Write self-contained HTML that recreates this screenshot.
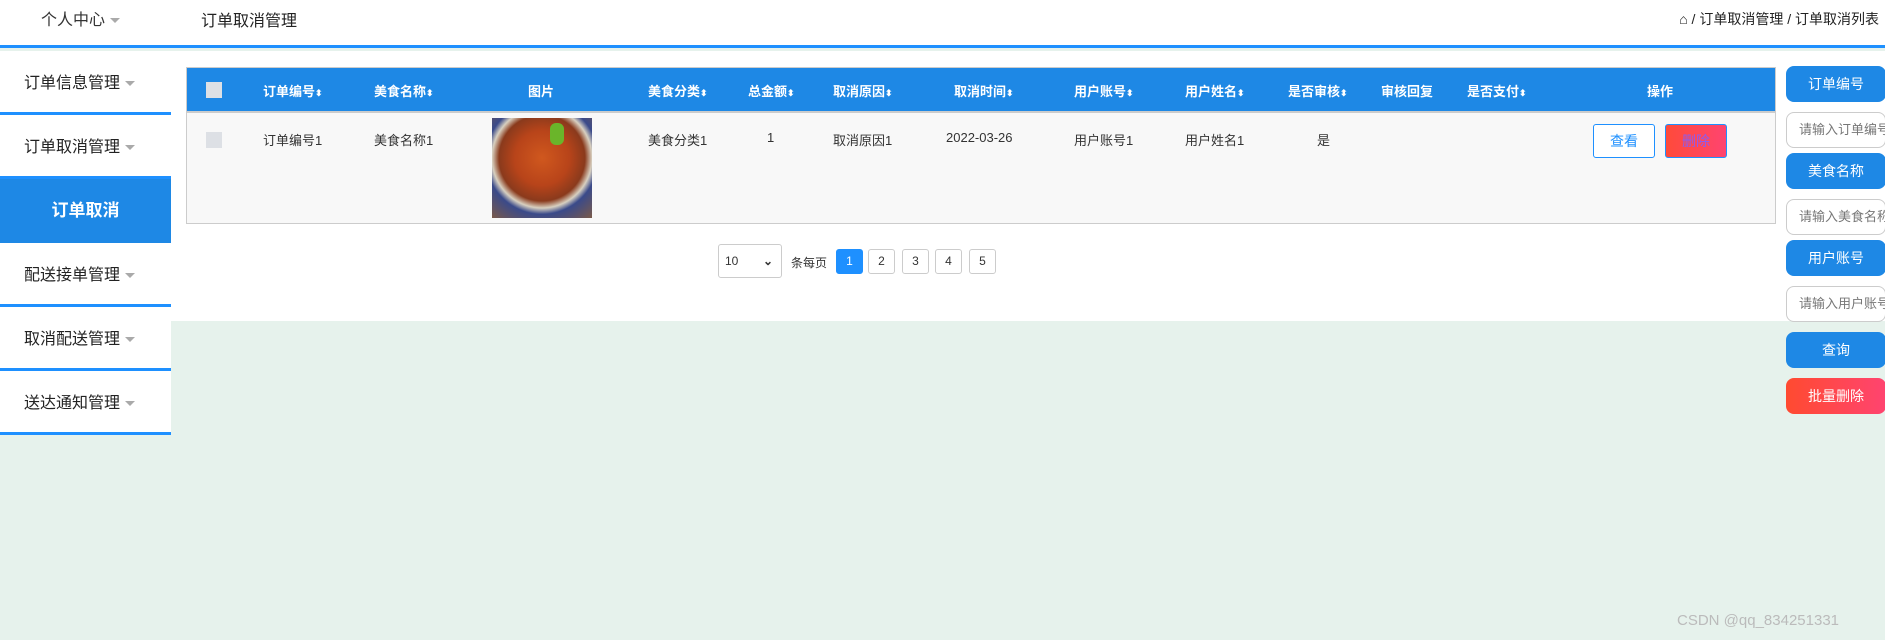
<!DOCTYPE html>
<html><head><meta charset="utf-8"><style>
*{margin:0;padding:0;box-sizing:border-box}
body{width:1885px;height:640px;overflow:hidden;background:#e6f2ec;font-family:"Liberation Sans","Noto Sans CJK SC",sans-serif;position:relative;color:#333}
.abs{position:absolute}
.hdr{left:0;top:0;width:1885px;height:48px;background:#fff;border-bottom:3px solid #1e90ff}
.white{left:171px;top:51px;width:1714px;height:270px;background:#fff}
.side{left:0;top:51px;width:171px}
.item{height:64px;background:#fff;border-bottom:3px solid #1e90ff;font-size:16px;padding-left:24px;line-height:66px;color:#222}
.item.act{background:#1e88e5;color:#fff;font-weight:bold;font-size:17px;text-align:center;padding:0;border-bottom:none;line-height:64px}
.car{display:inline-block;width:0;height:0;border-left:5px solid transparent;border-right:5px solid transparent;border-top:5px solid #aaa;vertical-align:middle;margin-left:5px}
.tbl{left:186px;top:67px;width:1590px;height:157px;border:1px solid #ccc;background:#f8f8f8}
.th{left:0;top:0;width:1588px;height:45px;background:#1e88e5;border-bottom:2px solid #ccc}
.h{position:absolute;top:13px;color:#fff;font-weight:bold;font-size:13px}
.c{position:absolute;top:62px;font-size:13px;color:#333}
.cb{position:absolute;left:19px;width:16px;height:16px;background:#dde0e5}
.s{font-size:9px}
.btn{border-radius:8px;color:#fff;font-size:14px;text-align:center;line-height:36px;background:#1e88e5;width:100px;height:36px;left:1786px}
.inp{border-radius:8px;border:1px solid #ccc;background:#fff;color:#777;font-size:13px;line-height:34px;padding-left:12px;width:100px;height:36px;left:1786px;overflow:hidden;white-space:nowrap}
.pg{top:249px;width:27px;height:25px;border:1px solid #ccc;border-radius:3px;background:#fff;font-size:12px;text-align:center;line-height:23px}
</style></head><body>
<div class="abs hdr"></div>
<div class="abs" style="left:41px;top:6px;font-size:16px">个人中心<span class="car"></span></div>
<div class="abs" style="left:201px;top:7px;font-size:16px;color:#222">订单取消管理</div>
<div class="abs" style="right:6px;top:9px;font-size:14px;color:#222">⌂ / 订单取消管理 / 订单取消列表</div>
<div class="abs white"></div>
<div class="abs side">
<div class="item">订单信息管理<span class="car"></span></div>
<div class="item">订单取消管理<span class="car"></span></div>
<div class="item act">订单取消</div>
<div class="item">配送接单管理<span class="car"></span></div>
<div class="item">取消配送管理<span class="car"></span></div>
<div class="item">送达通知管理<span class="car"></span></div>
</div>
<div class="abs tbl">
<div class="abs th"></div>
<div class="cb" style="top:14px"></div>
<div class="h" style="left:76px">订单编号<span class="s">⬍</span></div>
<div class="h" style="left:187px">美食名称<span class="s">⬍</span></div>
<div class="h" style="left:341px">图片</div>
<div class="h" style="left:461px">美食分类<span class="s">⬍</span></div>
<div class="h" style="left:561px">总金额<span class="s">⬍</span></div>
<div class="h" style="left:646px">取消原因<span class="s">⬍</span></div>
<div class="h" style="left:767px">取消时间<span class="s">⬍</span></div>
<div class="h" style="left:887px">用户账号<span class="s">⬍</span></div>
<div class="h" style="left:998px">用户姓名<span class="s">⬍</span></div>
<div class="h" style="left:1101px">是否审核<span class="s">⬍</span></div>
<div class="h" style="left:1194px">审核回复</div>
<div class="h" style="left:1280px">是否支付<span class="s">⬍</span></div>
<div class="h" style="left:1460px">操作</div>
<div class="cb" style="top:64px"></div>
<div class="c" style="left:76px">订单编号1</div>
<div class="c" style="left:187px">美食名称1</div>
<div class="abs" style="left:305px;top:50px;width:100px;height:100px;background:radial-gradient(circle at 50% 40%,#d0581e 0,#b8441a 35%,#8a3a1c 55%,#d8d0c0 64%,#3a4a8a 72%,#7a5a4a 100%)"><div style="position:absolute;left:58px;top:5px;width:14px;height:22px;background:#6ab52a;border-radius:6px"></div></div>
<div class="c" style="left:461px">美食分类1</div>
<div class="c" style="left:580px">1</div>
<div class="c" style="left:646px">取消原因1</div>
<div class="c" style="left:759px">2022-03-26</div>
<div class="c" style="left:887px">用户账号1</div>
<div class="c" style="left:998px">用户姓名1</div>
<div class="c" style="left:1130px">是</div>
<div class="abs" style="left:1406px;top:56px;width:62px;height:34px;border:1px solid #1e90ff;border-radius:3px;background:#fff;color:#1e90ff;font-size:14px;text-align:center;line-height:32px">查看</div>
<div class="abs" style="left:1478px;top:56px;width:62px;height:34px;border:1px solid #1e90ff;border-radius:3px;background:linear-gradient(90deg,#ff4a3a,#ff4470);color:#8a5cf0;font-size:14px;text-align:center;line-height:32px">删除</div>
</div>
<div class="abs" style="left:718px;top:244px;width:64px;height:34px;border:1px solid #ccc;border-radius:3px;background:#fff;font-size:12px;line-height:32px;padding-left:6px">10<span style="position:absolute;right:8px;font-size:12px;font-weight:bold">⌄</span></div>
<div class="abs" style="left:791px;top:254px;font-size:12px">条每页</div>
<div class="abs pg" style="left:836px;background:#1e90ff;border-color:#1e90ff;color:#fff">1</div>
<div class="abs pg" style="left:868px">2</div>
<div class="abs pg" style="left:902px">3</div>
<div class="abs pg" style="left:935px">4</div>
<div class="abs pg" style="left:969px">5</div>
<div class="abs btn" style="top:66px">订单编号</div>
<div class="abs inp" style="top:112px">请输入订单编号</div>
<div class="abs btn" style="top:153px">美食名称</div>
<div class="abs inp" style="top:199px">请输入美食名称</div>
<div class="abs btn" style="top:240px">用户账号</div>
<div class="abs inp" style="top:286px">请输入用户账号</div>
<div class="abs btn" style="top:332px">查询</div>
<div class="abs btn" style="top:378px;background:linear-gradient(90deg,#ff4a30,#ff4470)">批量删除</div>
<div class="abs" style="left:1677px;top:612px;font-size:15px;color:#bbb">CSDN @qq_834251331</div>
</body></html>
